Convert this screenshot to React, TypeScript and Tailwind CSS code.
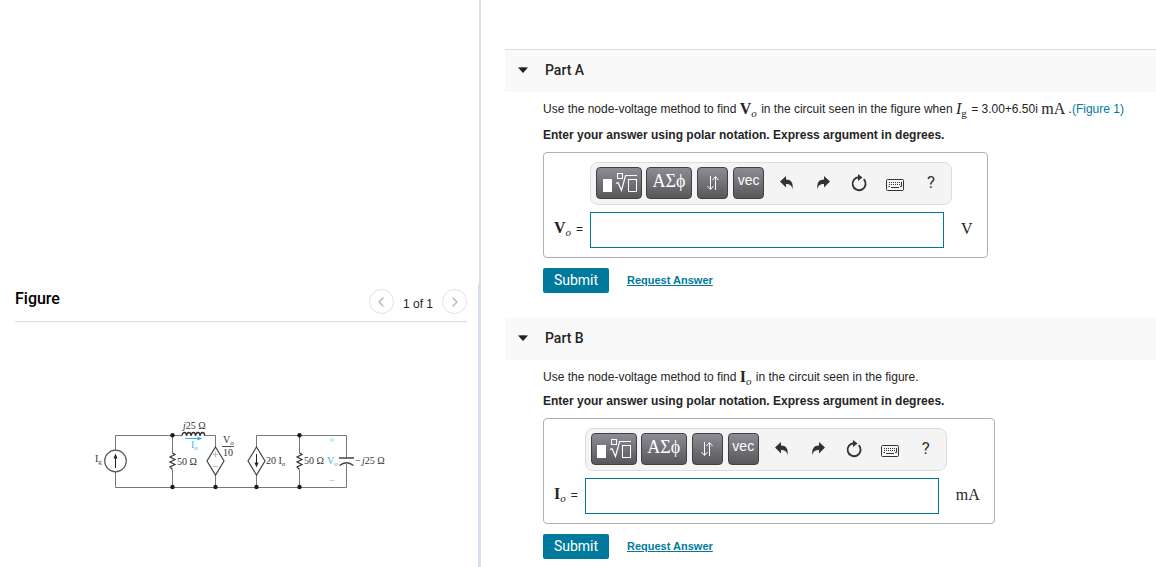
import { useId, type ReactNode } from "react";
import { ChevronLeft, ChevronRight } from "lucide-react";

const SERIF = "font-['Liberation_Serif',serif]";

function Sym({ name, sub, bold = true, subItalic = true }: { name: string; sub: string; bold?: boolean; subItalic?: boolean }) {
  return (
    <span className={`${SERIF} pr-px text-[16px] leading-none ${bold ? "font-bold" : "italic"}`}>
      {name}
      <sub className={`bottom-[-3px] text-[11px] leading-none ${bold ? "font-normal" : ""} ${subItalic ? "italic" : "not-italic"}`}>{sub}</sub>
    </span>
  );
}

function Circuit() {
  return (
    <svg
      viewBox="91 415 301 80"
      className="block h-[80px] w-[301px]"
      role="img"
      aria-label="Circuit diagram"
      fill="none"
      stroke="#555"
      strokeWidth="1"
    >
      <path d="M115.5 450V435.5H182M206 435.5H215.5V447M115.5 472V487.5H346.5V464M256.500 447V435.5H346.5V458M215.500 475V487M256.500 475V487M172.500 435V453M172.500 470V487M299.500 435V453M299.500 470V487" stroke="#777" />
      <circle cx="115.500" cy="461" r="10.800" strokeWidth="1.200" />
      <path d="M115.500 468V457" stroke="#222" />
      <path d="M115.500 453.500l2 5h-4z" fill="#222" stroke="none" />
      <path d="M172.500 453l2.500 1.500-5 2.500 5 2.500-5 2.500 5 2.500-5 2.500 2.500 2.500M299.500 453l2.500 1.500-5 2.500 5 2.500-5 2.500 5 2.500-5 2.500 2.500 2.500" stroke="#333" strokeWidth="1.200" />
      <path d="M182 435.500q.5-3 2.500-3t2 3.500q.5-3.500 2.500-3.500t2 3.500q.5-3.500 2.500-3.500t2 3.500q.5-3.500 2.500-3.500t2 3.500q.5-3.500 2.500-3.500t2.500 3.500" stroke="#333" strokeWidth="1.300" />
      <path d="M215.500 447l8.500 14-8.500 14-8.500-14zM256.500 447l8.500 14-8.500 14-8.500-14z" stroke="#444" strokeWidth="1.200" />
      <path d="M213 454.500h5M215.500 452v5M213 466.500h5" stroke="#bbb" />
      <path d="M256.500 454V463" stroke="#222" />
      <path d="M256.500 467.500l-2-5h4z" fill="#222" stroke="none" />
      <path d="M339 458H354M339.500 465.500Q346.500 460 353.500 465.500" stroke="#444" strokeWidth="1.400" />
      <path d="M185 438.500H198" stroke="#35b6e8" />
      <path d="M202.500 438.500l-5-2v4z" fill="#35b6e8" stroke="none" />
      <path d="M329.500 440h5M332 437.500v5M329.500 480.500h5" stroke="#a5def4" />
      <path d="M222 446.500h12" />
      <g fill="#1c1c1c" stroke="none">
        <circle cx="172.500" cy="435.300" r="2.200" />
        <circle cx="172.500" cy="487" r="2.200" />
        <circle cx="215.500" cy="487" r="2.200" />
        <circle cx="256.500" cy="487" r="2.200" />
        <circle cx="299.500" cy="435.300" r="2.200" />
        <circle cx="299.500" cy="487" r="2.200" />
      </g>
      <g fill="#333" stroke="none" className="font-['Liberation_Serif',serif] text-[10px]">
        <text x="95" y="462">I<tspan dy="2" fontSize="7">g</tspan></text>
        <text x="183" y="429"><tspan fontStyle="italic">j</tspan>25 Ω</text>
        <text x="177" y="465">50 Ω</text>
        <text x="223" y="443">V<tspan dy="2" fontSize="7" fontStyle="italic">o</tspan></text>
        <text x="223" y="456">10</text>
        <text x="266" y="464">20 I<tspan dy="2" fontSize="7" fontStyle="italic">o</tspan></text>
        <text x="304" y="464">50 Ω</text>
        <text x="355" y="464">−<tspan x="362" fontStyle="italic">j</tspan>25 Ω</text>
        <text x="191" y="448" fill="#35b6e8">I<tspan dy="2" fontSize="7" fontStyle="italic">o</tspan></text>
        <text x="327" y="464" fill="#35b6e8">V<tspan dy="2" fontSize="7" fontStyle="italic">o</tspan></text>
      </g>
    </svg>
  );
}

const KEY = "flex h-8 items-center justify-center rounded border border-[#3f3f44] bg-linear-to-b from-[#8d8c95] to-[#58585a] text-white";
const ACTION = "flex h-8 w-9 items-center justify-center text-[#333]";

function Toolbar() {
  return (
    <div className="flex h-[43px] items-center rounded-lg border border-[#dcdcdc] bg-[#f4f4f4] pr-[2px] pb-[2px] pl-[5px]">
      <button type="button" aria-label="Templates" className={`${KEY} mr-1 w-[46px]`}>
        <svg viewBox="0 0 37 22" className="h-[22px] w-[37px]" fill="none" stroke="#fff">
          <rect x="2" y="7" width="9" height="13" fill="#fff" stroke="none" />
          <rect x="16.500" y="1.500" width="5" height="5" />
          <path d="M15 11.500l2-1 3.500 8L24.500 3.500H36" strokeWidth="1.200" />
          <rect x="27.500" y="7.500" width="8" height="12" />
        </svg>
      </button>
      <button type="button" aria-label="Greek symbols" className={`${KEY} ${SERIF} mr-[5px] w-[46px] pb-[2px] text-[18px]`}>ΑΣϕ</button>
      <button type="button" aria-label="Arrows" className={`${KEY} mr-[5px] w-[31px]`}>
        <svg viewBox="0 0 14 16" className="h-4 w-[14px]" fill="none" stroke="#fff">
          <path d="M4.500 1V14M1.500 11l3 3.500 3-3.500M9.500 15V2M6.500 5l3-3.500 3 3.500" />
        </svg>
      </button>
      <button type="button" className={`${KEY} mr-[5px] w-[31px] pb-1 text-[14px]`}>vec</button>
      <button type="button" aria-label="Undo" className={ACTION}>
        <svg viewBox="0 0 14 14" className="h-[14px] w-[14px]" fill="currentColor">
          <path d="M0 5.500L6 0v3.500c5 0 7.500 3 6.500 10-.5-4-2.500-5.500-6.500-5.500v3.500z" />
        </svg>
      </button>
      <button type="button" aria-label="Redo" className={ACTION}>
        <svg viewBox="0 0 14 14" className="h-[14px] w-[14px]" fill="currentColor">
          <path d="M14 5.500L8 0v3.500c-5 0-7.500 3-6.500 10 .5-4 2.500-5.500 6.500-5.500v3.500z" />
        </svg>
      </button>
      <button type="button" aria-label="Reset" className={ACTION}>
        <svg viewBox="0 0 18 18" className="h-[18px] w-[18px]" fill="none" stroke="currentColor" strokeWidth="1.900">
          <path d="M9 3.200A6.500 6.500 0 1 0 13.800 5.200" />
          <path d="M8 0l4.500 3.500L8 7z" fill="currentColor" stroke="none" />
        </svg>
      </button>
      <button type="button" aria-label="Keyboard" className={ACTION}>
        <svg viewBox="0 0 18 12" className="mt-1 h-3 w-[18px]" fill="none" stroke="currentColor">
          <rect x=".5" y=".5" width="17" height="11" rx="1" />
          <path d="M3 3.500H15.500M3 5.500H15.500" strokeDasharray="1 1" />
          <path d="M2.500 7.500H4M14 7.500h1.500V3M5 8.500h8" />
        </svg>
      </button>
      <button type="button" aria-label="Help" className={`${ACTION} text-[17px] font-['Roboto',sans-serif]`}>?</button>
    </div>
  );
}

type PartProps = { title: string; first?: boolean; prompt: ReactNode; symbol: ReactNode; unit: string; label: string };

function Part({ title, first = false, prompt, symbol, unit, label }: PartProps) {
  const id = useId();
  return (
    <section className={first ? "" : "mt-[25px]"}>
      <h2 className={`flex items-center bg-[#f9f9f9] px-[13px] pb-[2px] text-[14px] ${first ? "h-[43px] border-t border-[#dcdcdc]" : "h-[42px]"}`}>
        <button type="button" className="flex items-center gap-[17px] text-left font-['Roboto',sans-serif] font-medium">
          <svg viewBox="0 0 10 6" className="h-[6px] w-[10px]" fill="#222"><path d="M0 .500Q5-.2 10 .500L5 6z" /></svg>
          {title}
        </button>
      </h2>
      <div className="pl-[38px]">
        <p className="mt-2 flex h-[18px] items-center text-[12px] whitespace-pre">{prompt}</p>
        <p className={`h-[18px] text-[12px] leading-[18px] font-bold ${first ? "mt-2" : "mt-[6px]"}`}>Enter your answer using polar notation. Express argument in degrees.</p>
        <div className="mt-2 flex w-fit rounded border border-[#b0b0b0] py-[9px] pr-[14px] pl-[10px]">
          <label htmlFor={id} className="mt-[49px] flex h-9 items-center gap-1 pr-[7px] text-[12px]">
            <span>{symbol}</span>=
          </label>
          <div>
            <Toolbar />
            <input
              id={id}
              aria-label={label}
              className="mt-[7px] block h-9 w-[354px] border border-[#007a9c] bg-white px-2 text-[14px] outline-none"
            />
          </div>
          <span className={`${SERIF} mt-[49px] flex h-9 items-center pl-[9px] text-[16px]`}>{unit}</span>
        </div>
        <div className="mt-[10px] flex items-center gap-[18px]">
          <button type="button" className="h-[25px] w-[66px] rounded-xs bg-[#007a9c] pb-px text-[14px] leading-6 text-white font-['Roboto',sans-serif]">Submit</button>
          <a href="#answer" className="text-[11px] font-bold text-[#007a9c] underline">Request Answer</a>
        </div>
      </div>
    </section>
  );
}

export default function App() {
  return (
    <div className="flex min-h-screen bg-white font-['Liberation_Sans',Arial,sans-serif] text-[#252525]">
      <aside className="flex w-[481px] shrink-0 flex-col">
        <div className="h-[284px] border-r-2 border-[#d6e0ec]" />
        <div className="flex-1 border-r-3 border-[#d6e0ec] pr-[11px] pl-[15px]">
          <header className="flex h-[38px] items-start justify-between border-b border-[#dcdcdc]">
            <h1 className="mt-1 text-[16px] leading-[22px] font-medium text-black font-['Roboto',sans-serif]">Figure</h1>
            <div className="mt-[5px] flex items-center gap-[9px] text-[12px]">
              <button type="button" aria-label="Previous figure" className="flex size-[25px] items-center justify-center rounded-full border border-[#e2e2e2] text-[#b5b5b5]">
                <ChevronLeft size={16} />
              </button>
              <span className="pt-1">1 of 1</span>
              <button type="button" aria-label="Next figure" className="flex size-[25px] items-center justify-center rounded-full border border-[#e2e2e2] text-[#b5b5b5]">
                <ChevronRight size={16} />
              </button>
            </div>
          </header>
          <div className="mt-[93px] flex justify-center">
            <Circuit />
          </div>
        </div>
      </aside>
      <main className="min-w-0 flex-1 pt-[49px] pl-6">
        <Part
          first
          title="Part A"
          label="V o in volts"
          unit="V"
          symbol={<Sym name="V" sub="o" />}
          prompt={
            <>
              Use the node-voltage method to find <Sym name="V" sub="o" /> in the circuit seen in the figure when{" "}
              <Sym name="I" sub="g" bold={false} subItalic={false} /> = 3.00+6.50i <span className={`${SERIF} text-[16px]`}>mA</span> .
              <a href="#figure" className="text-[#007a9c]">(Figure 1)</a>
            </>
          }
        />
        <Part
          title="Part B"
          label="I o in milliamperes"
          unit="mA"
          symbol={<Sym name="I" sub="o" />}
          prompt={
            <>
              Use the node-voltage method to find <Sym name="I" sub="o" /> in the circuit seen in the figure.
            </>
          }
        />
      </main>
    </div>
  );
}
